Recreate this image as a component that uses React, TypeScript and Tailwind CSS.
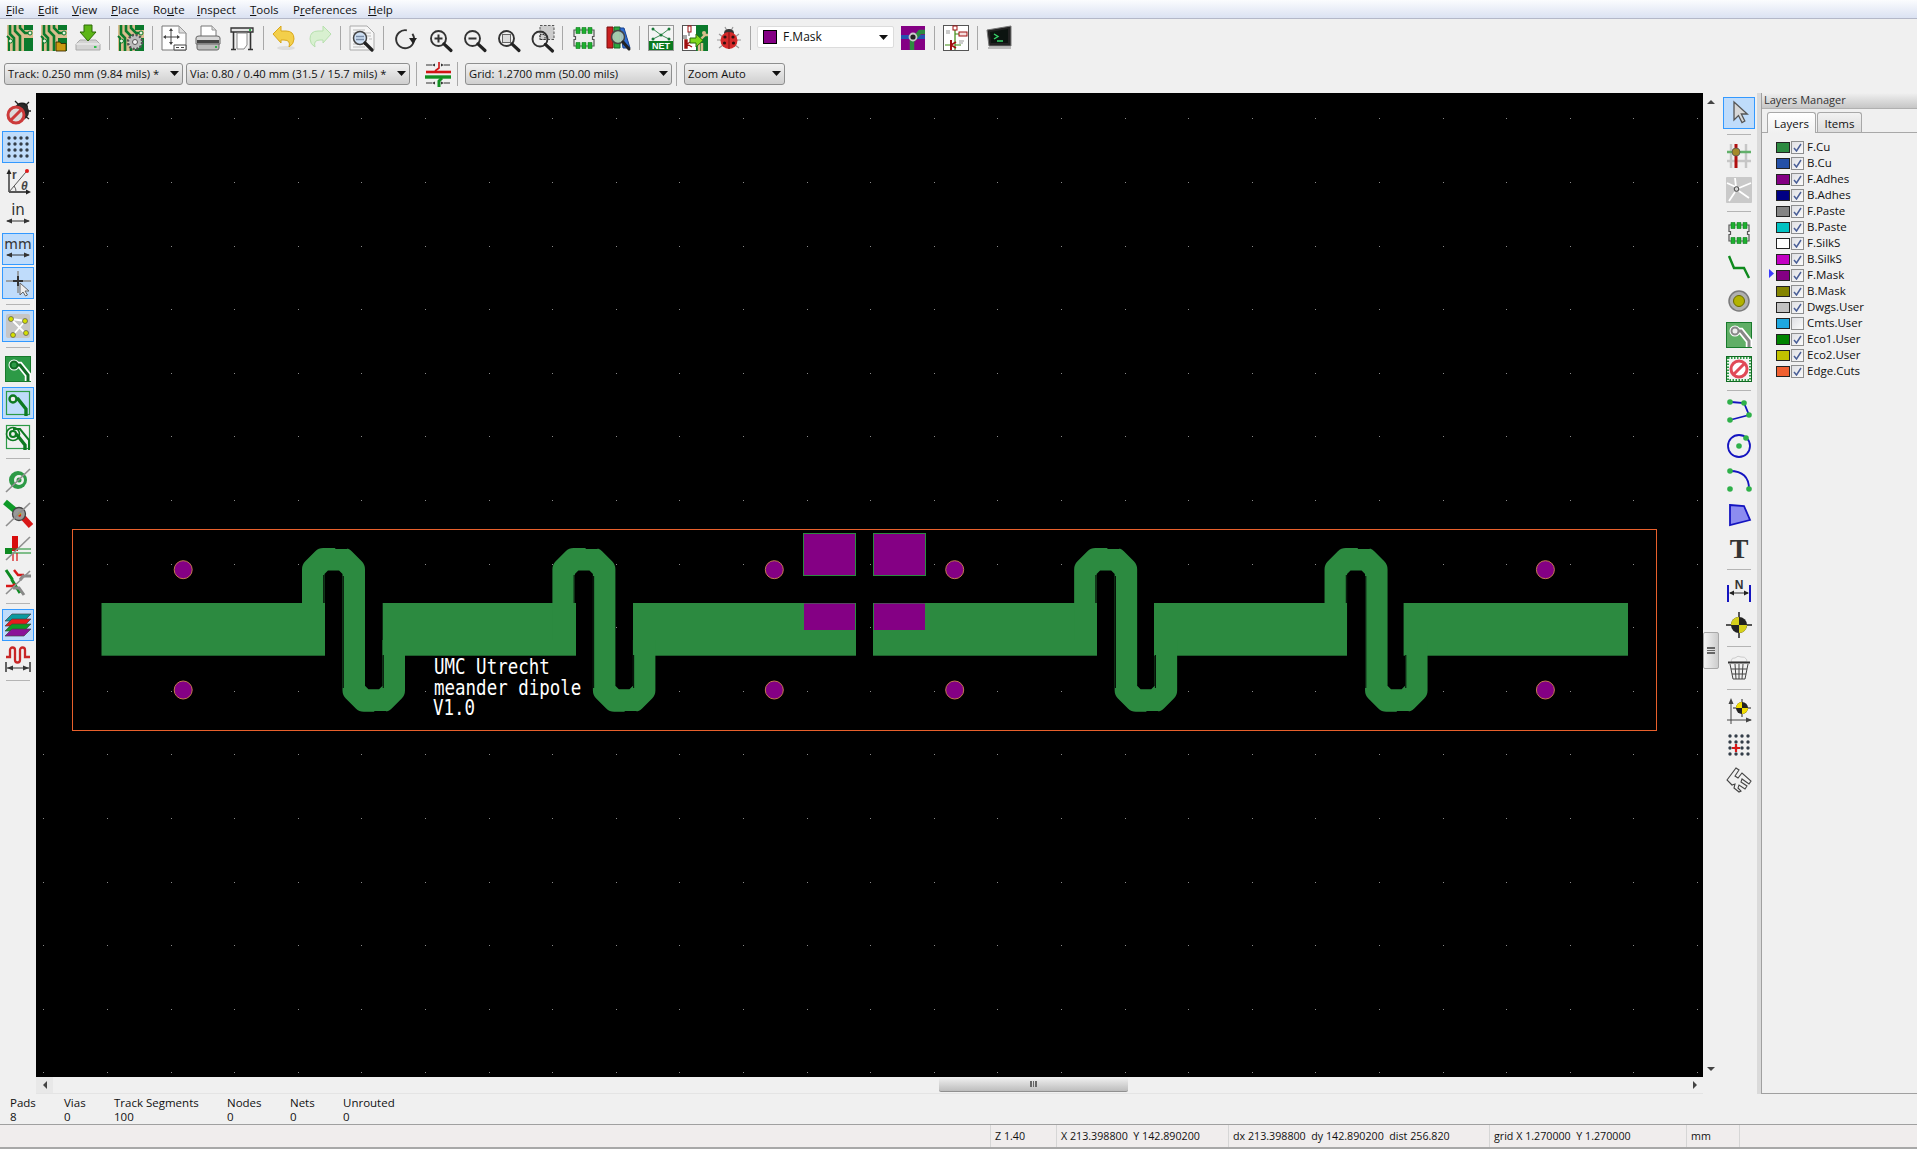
import React from 'react';

const range = (n: number) => Array.from({ length: n }, (_, i) => i);

// --- shared icon parts (all in a 26x26 box) ---
const Board = () => (
  <>
    <rect width="26" height="26" fill="#d9bd8e" />
    <path d="M17 13h9v13h-9zM17 0h9v5h-9z" fill="#0b7a2c" />
    <path d="M3 0v9l4 4v13M8 0v6l5 5v15M13 0v3l5 5h5" fill="none" stroke="#0b7a2c" strokeWidth="2.6" />
    <path d="M0 11l2 2v13" fill="none" stroke="#0b7a2c" strokeWidth="2" />
    <circle cx="23" cy="8" r="2" fill="#e8f4e0" stroke="#0b7a2c" />
    <circle cx="3.5" cy="16" r="2" fill="#e8f4e0" stroke="#0b7a2c" />
  </>
);

const Mag = ({ cx = 12.5, cy = 13.5, r = 7.5 }: { cx?: number; cy?: number; r?: number }) => (
  <>
    <circle cx={cx} cy={cy} r={r} fill="none" stroke="#333" strokeWidth="1.900" />
    <path d={`M${cx + r * 0.72} ${cy + r * 0.72}L${cx + r + 5} ${cy + r + 4.5}`} stroke="#222" strokeWidth="3.200" strokeLinecap="round" />
  </>
);

const Chip = () => (
  <>
    <path d="M3 5h20v6.500h-1.500v3H23V21H3v-6.500h1.500v-3H3z" fill="#eeeeee" stroke="#555" strokeWidth="1.200" />
    <path d="M5 2.500h4v6H5zM11 2.500h4v6h-4zM17 2.500h4v6h-4zM5 17.500h4v6H5zM11 17.500h4v6h-4zM17 17.500h4v6h-4z" fill="#1db02f" stroke="#0d7a1c" strokeWidth=".6" />
  </>
);

const Slash = () => <path d="M1 25L25 2" stroke="#8f8f8f" strokeWidth="1.600" />;

const Ladybug = () => (
  <>
    <path d="M3 9L7 12M23 9L19 12M1 15H5M25 15H21M3 23L7 20M23 23L19 20M9 2L11 6M17 2L15 6" stroke="#999" strokeWidth="1.200" fill="none" />
    <ellipse cx="13" cy="8" rx="5" ry="4" fill="#333" />
    <circle cx="13" cy="15.500" r="8.500" fill="#d62a2a" />
    <path d="M13 7v17" stroke="#7a1414" />
    <circle cx="9" cy="12" r="1.600" fill="#331010" />
    <circle cx="17" cy="12" r="1.600" fill="#331010" />
    <circle cx="8.500" cy="18" r="1.600" fill="#331010" />
    <circle cx="17.500" cy="18" r="1.600" fill="#331010" />
  </>
);

const Dots = () => (
  <>
    {range(16).map((i) => (
      <circle key={i} cx={4 + (i % 4) * 6} cy={4 + Math.floor(i / 4) * 6} r="1.700" fill="#333d48" />
    ))}
  </>
);

const icons: Record<string, React.ReactNode> = {
  board: <Board />,
  boardOpen: (
    <>
      <Board />
      <path d="M15 17h4l1 1.500h5V26H15z" fill="#c99a10" stroke="#3a2c00" strokeWidth=".9" />
    </>
  ),
  save: (
    <>
      <path d="M5 15L1 19v6h24v-6l-4-4z" fill="#d3d3d3" stroke="#aaa" />
      <path d="M1 19h24" stroke="#f4f4f4" />
      <rect x="19" y="21" width="2.500" height="2" fill="#2fc04a" />
      <path d="M9 0h8v7h4l-8 9-8-9h4z" fill="#5cb516" stroke="#2c6a06" />
    </>
  ),
  boardGear: (
    <>
      <Board />
      <circle cx="17" cy="17" r="7" fill="#cfcfcf" stroke="#555" strokeWidth="2.600" strokeDasharray="2.200 1.500" />
      <circle cx="17" cy="17" r="5.500" fill="#bbb" />
      <circle cx="17" cy="17" r="2.500" fill="#f4f4f4" stroke="#555" />
    </>
  ),
  page: (
    <>
      <path d="M1 1h17l7 7v17H1z" fill="#fff" stroke="#777" />
      <path d="M18 1v7h7z" fill="#ddd" stroke="#999" />
      <path d="M10 4v15M3 12h15" stroke="#444" />
      <path d="M10 3l-2 3h4zM10 20l-2-3h4zM2 12l3-2v4zM19 12l-3-2v4z" fill="#444" />
      <path d="M13 20h12v5H13z" fill="#fff" stroke="#444" />
      <path d="M15 22.500h3M20 22.500h3" stroke="#444" />
    </>
  ),
  printer: (
    <>
      <path d="M6 1h11l4 4v8H6z" fill="#fff" stroke="#777" />
      <path d="M17 1v4h4" fill="#ddd" stroke="#999" />
      <path d="M1 13q0-2 3-2h18q3 0 3 2v6H1z" fill="#d8d8d8" stroke="#666" />
      <path d="M2 15h22v3H2z" fill="#444" />
      <path d="M2 19h22v4q0 2-2 2H4q-2 0-2-2z" fill="#bbb" stroke="#666" />
      <rect x="20" y="21" width="2" height="2" fill="#33b04a" />
    </>
  ),
  plotter: (
    <>
      <path d="M2 3h22v4H2z" fill="#e4e4e4" stroke="#333" strokeWidth="1.300" />
      <path d="M4.500 7v17M21.500 7v17M2 24.500h5M19 24.500h5" stroke="#333" strokeWidth="1.600" />
      <path d="M8 8h10v12l-3 4H8z" fill="#fff" stroke="#888" />
      <rect x="20" y="4" width="2" height="2" fill="#2fb04a" />
    </>
  ),
  undo: (
    <>
      <ellipse cx="14" cy="23" rx="9" ry="2" fill="#ddd" />
      <path d="M1 9L9 1v5h5q8 0 8 8 0 5-5 8 2-7-5-7H9v3z" fill="#f3cf4a" stroke="#d9a71c" />
    </>
  ),
  redo: <path d="M25 9l-8-8v5h-5q-8 0-8 8 0 5 5 8-2-7 5-7h3v3z" fill="#d8f0d0" stroke="#b7e0ae" />,
  doc: (
    <>
      <path d="M1 1h17l7 7v17H1z" fill="#f6f6f6" stroke="#aaa" />
      <path d="M4 5h12M4 8h18M4 19h8M4 22h12M18 11h4M20 14h3" stroke="#bbb" />
      <circle cx="11" cy="13" r="6.500" fill="#cfe0f4" stroke="#444" strokeWidth="1.500" />
      <path d="M7 11.500h8M7 14.500h8" stroke="#7c8ea8" strokeWidth="1.500" />
      <path d="M16 18l7 7" stroke="#222" strokeWidth="3.200" strokeLinecap="round" />
    </>
  ),
  refresh: (
    <>
      <path d="M19.500 8A9 9 0 1 0 22 14" fill="none" stroke="#333" strokeWidth="1.900" transform="rotate(-35 13 14)" />
      <path d="M17 13h8l-4 6z" fill="#222" />
    </>
  ),
  zoomIn: (
    <>
      <Mag />
      <path d="M8.500 13.500h8M12.500 9.500v8" stroke="#333" strokeWidth="2" />
    </>
  ),
  zoomOut: (
    <>
      <Mag />
      <path d="M8.500 13.500h8" stroke="#333" strokeWidth="2" />
    </>
  ),
  zoomFit: (
    <>
      <Mag />
      <rect x="8.500" y="9.500" width="8" height="8" fill="#ddd" stroke="#666" />
    </>
  ),
  zoomArea: (
    <>
      <rect x="12" y=".5" width="14" height="14" fill="#cccccc" stroke="#555" strokeDasharray="2.500 1.500" />
      <Mag cx={12} cy={14} />
      <path d="M12 9.500h5v5h-5z" fill="none" stroke="#333" strokeDasharray="1.500 1" />
    </>
  ),
  chip: <Chip />,
  layerLens: (
    <>
      <path d="M2 2h6v21H2z" fill="#c91f1f" stroke="#7a0f0f" />
      <path d="M9 2h6v21H9z" fill="#2aa840" stroke="#146a24" />
      <path d="M15 3l4 0 6 20h-7z" fill="#2f6dd1" stroke="#1a4290" />
      <circle cx="13" cy="12" r="6.500" fill="#b9d2c0" fillOpacity=".85" stroke="#444" strokeWidth="1.500" />
      <path d="M18 17l6 7" stroke="#222" strokeWidth="3" strokeLinecap="round" />
    </>
  ),
  net: (
    <>
      <rect x=".5" y=".5" width="25" height="25" fill="#f4f4f4" stroke="#999" />
      <path d="M5 4l8 6 8-6M5 14l8-4 8 4" stroke="#3d8d55" fill="none" />
      <circle cx="5" cy="4" r="1.500" fill="#1a7a3a" />
      <circle cx="21" cy="4" r="1.500" fill="#1a7a3a" />
      <circle cx="13" cy="10" r="1.500" fill="#1a7a3a" />
      <circle cx="5" cy="14" r="1.500" fill="#1a7a3a" />
      <circle cx="21" cy="14" r="1.500" fill="#1a7a3a" />
      <rect x="1" y="16" width="24" height="9" fill="#0b7a1f" />
      <text x="13" y="24" textAnchor="middle" fill="#fff" fontSize="9" fontWeight="700" className="font-['Liberation_Sans',sans-serif]">NET</text>
    </>
  ),
  schToPcb: (
    <>
      <rect x=".5" y=".5" width="25" height="25" fill="#fff" stroke="#555" />
      <path d="M14 0h12v26H14z" fill="#0b7a2c" />
      <path d="M17 26V16l6-6h3M20 26v-8" stroke="#d9bd8e" strokeWidth="2.400" fill="none" />
      <circle cx="22" cy="8" r="2" fill="#d9bd8e" />
      <rect x="6" y="1" width="3" height="6" fill="#fff" stroke="#a01010" />
      <path d="M7 7v4M1 11h4M1 13h4" stroke="#555" />
      <path d="M3 15h2v8H3zM5 19l5-3M5 19l5 3" stroke="#a01010" strokeWidth="1.400" fill="#a01010" />
      <path d="M8 13h6V9l7 6.500-7 6.500v-4H8z" fill="#7fd81a" stroke="#2d6d08" />
    </>
  ),
  bug: <Ladybug />,
  viaSize: (
    <g transform="translate(1 1)">
      <rect width="24" height="24" fill="#840084" />
      <path d="M0 9h24v4H0z" fill="#2454b0" />
      <path d="M11 24v-9l8-9h5" stroke="#2c8a40" strokeWidth="4.500" fill="none" />
      <circle cx="12" cy="11" r="3.500" fill="#222" stroke="#ccc" strokeWidth="1.800" />
    </g>
  ),
  schematic: (
    <>
      <rect x=".5" y=".5" width="25" height="25" fill="#fff" stroke="#555" />
      <path d="M12 1v24M12 9h6M2 20h6M12 20h6" stroke="#3d8a10" strokeWidth="1.200" />
      <rect x="10" y="1" width="4" height="4" fill="#fff" stroke="#a01010" />
      <rect x="16" y="7" width="8" height="4" fill="#f4dede" stroke="#a01010" />
      <path d="M8 15v10" stroke="#a01010" strokeWidth="2" />
      <path d="M8 20l5-3M8 20l5 3" stroke="#a01010" strokeWidth="1.500" />
      <path d="M3 6h4M3 8h4M16 16h5M16 18h4" stroke="#999" />
    </>
  ),
  terminal: (
    <>
      <path d="M1 5L25 1v20H3z" fill="#222" stroke="#777" />
      <path d="M4 7l18-3v14H5z" fill="#0c1410" />
      <path d="M8 9l4 2.500-4 2.500M11 16h6" stroke="#38d46a" fill="none" strokeWidth="1.400" />
      <path d="M2 23h23" stroke="#bbb" strokeWidth="2" />
    </>
  ),
  trackVia: (
    <>
      <path d="M1 4h6M19 4h6M1 22h6M19 22h6" stroke="#333" />
      <path d="M7 4l3-1.500v3zM19 4l-3-1.500v3zM7 22l3-1.500v3zM19 22l-3-1.500v3z" fill="#333" />
      <path d="M10 10l4-3V1" stroke="#d01515" strokeWidth="1.600" fill="none" />
      <path d="M1 11h25" stroke="#d01515" strokeWidth="2.600" />
      <path d="M0 16h26" stroke="#119022" strokeWidth="3.400" />
      <path d="M17 17l-3 3v6" stroke="#119022" strokeWidth="3" fill="none" />
    </>
  ),
  // left bar
  bugOff: (
    <>
      <ellipse cx="17" cy="7" rx="6" ry="4.500" fill="#1c1c1c" />
      <circle cx="16" cy="12" r="8" fill="#2a2a2a" />
      <path d="M10 1l4 4M24 2l-4 4M26 11h-4M24 19l-4-3M16 22v-3" stroke="#222" strokeWidth="1.300" />
      <circle cx="11" cy="15" r="8" fill="#dcdcdc" stroke="#cc3a3a" strokeWidth="3" />
      <path d="M5.500 20.500L16.500 9.500" stroke="#cc3a3a" strokeWidth="3" />
    </>
  ),
  grid: <Dots />,
  polar: (
    <>
      <path d="M4 24V3M4 24h20" stroke="#222" strokeWidth="1.300" />
      <path d="M4 1l-2.500 5h5zM26 24l-5-2.500v5z" fill="#222" />
      <path d="M4 24L21 4" stroke="#555" />
      <path d="M11 24a8 8 0 0 0-2-6" stroke="#555" fill="none" />
      <circle cx="22" cy="3" r="2" fill="#e01818" />
      <text x="7" y="11" fontSize="12" fontWeight="700" fill="#444" className="font-['Liberation_Sans',sans-serif]">r</text>
      <text x="16" y="22" fontSize="12" fontWeight="700" fontStyle="italic" fill="#444" className="font-['Liberation_Sans',sans-serif]">θ</text>
    </>
  ),
  inch: (
    <>
      <text x="13" y="13" textAnchor="middle" fontSize="15" fill="#333" className="font-['DejaVu_Sans',sans-serif]">in</text>
      <path d="M2 19h22" stroke="#333" />
      <path d="M1 19l6-2.500v5zM25 19l-6-2.500v5z" fill="#333" />
    </>
  ),
  mm: (
    <>
      <text x="13" y="13" textAnchor="middle" fontSize="14" fill="#333" className="font-['DejaVu_Sans',sans-serif]">mm</text>
      <path d="M2 19h22" stroke="#333" />
      <path d="M1 19l6-2.500v5zM25 19l-6-2.500v5z" fill="#333" />
    </>
  ),
  cursor: (
    <>
      <path d="M1 11h25M13 1v22" stroke="#8a8a8a" strokeWidth="1.500" />
      <path d="M13 6v10M8 11h10" stroke="#333" strokeWidth="2" />
      <path d="M15 13v12l3-3 2.500 4 2-1-2.500-4h4z" fill="#eee" stroke="#666" />
    </>
  ),
  ratsnest: (
    <>
      <rect x="1" y="1" width="24" height="24" rx="2" fill="#c6c6c6" />
      <path d="M6 6l14 14M8 22L20 8M6 6l15 2" stroke="#fff" strokeWidth="1.800" />
      <circle cx="6" cy="6" r="2.500" fill="#d6e000" stroke="#555" strokeWidth=".7" />
      <circle cx="20" cy="8" r="2.500" fill="#d6e000" stroke="#555" strokeWidth=".7" />
      <circle cx="8" cy="22" r="2.500" fill="#d6e000" stroke="#555" strokeWidth=".7" />
      <circle cx="21" cy="20" r="2.500" fill="#d6e000" stroke="#555" strokeWidth=".7" />
    </>
  ),
  padFill: (
    <>
      <rect x=".5" y=".5" width="25" height="25" fill="#2c9a46" stroke="#187a2c" />
      <path d="M9 9h6l8 10v6" stroke="#fff" strokeWidth="6.500" fill="none" />
      <circle cx="9" cy="9" r="5.500" fill="#fff" />
      <path d="M9 9h6l8 10v6" stroke="#106a22" strokeWidth="3" fill="none" />
      <circle cx="9" cy="9" r="3.500" fill="#2c9a46" stroke="#106a22" strokeWidth="2" />
    </>
  ),
  padLine: (
    <>
      <rect x="1.500" y="1.500" width="23" height="23" fill="none" stroke="#2c9a46" strokeWidth="1.200" />
      <path d="M9 9h4l8 10v7" stroke="#0e7a22" strokeWidth="3.400" fill="none" />
      <circle cx="8" cy="9" r="3.500" fill="#f0f0f0" stroke="#0e7a22" strokeWidth="2.400" />
    </>
  ),
  padDouble: (
    <>
      <rect x="1.500" y="1.500" width="23" height="23" fill="none" stroke="#2c9a46" strokeWidth="1.200" />
      <path d="M8 5h7l9 11v10" stroke="#0e7a22" strokeWidth="2" fill="none" />
      <path d="M9 11h3l8 10v5" stroke="#0e7a22" strokeWidth="3.400" fill="none" />
      <circle cx="8" cy="10" r="3" fill="#f0f0f0" stroke="#0e7a22" strokeWidth="2.200" />
      <circle cx="8" cy="10" r="6.500" fill="none" stroke="#0e7a22" strokeWidth="1.600" />
    </>
  ),
  viaOff: (
    <>
      <circle cx="13" cy="13" r="9" fill="#2c9a46" />
      <circle cx="14" cy="13" r="5" fill="#f0f0f0" />
      <circle cx="14" cy="13" r="2.500" fill="#2c9a46" />
      <Slash />
    </>
  ),
  holeOff: (
    <>
      <path d="M0 1l12 10" stroke="#0e9a28" strokeWidth="6" />
      <path d="M15 13l11 12" stroke="#d81818" strokeWidth="6" />
      <circle cx="14" cy="13" r="6.500" fill="#999" stroke="#444" strokeWidth="1.300" />
      <path d="M14 11a3 3 0 0 1 2 4l-4 0z" fill="#c9b400" />
      <path d="M16 13a3 3 0 0 1-1 3l-2-1z" fill="#d81818" />
      <Slash />
    </>
  ),
  padOff: (
    <>
      <path d="M7 1h6v15H7z" fill="#d80c0c" />
      <path d="M0 13h7v6H0z" fill="#0e8a22" />
      <path d="M7 14h19M7 18h19" stroke="#0e8a22" strokeWidth="1.200" />
      <path d="M8 18v8M12 18v8" stroke="#d80c0c" strokeWidth="1.200" />
      <Slash />
    </>
  ),
  traceOff: (
    <>
      <path d="M1 1l6 9v1l8 13" stroke="#0e8a22" strokeWidth="3" fill="none" />
      <path d="M9 1l4 5h6" stroke="#d81818" strokeWidth="2.500" fill="none" />
      <path d="M26 7h-8l-3 4" stroke="#888" strokeWidth="3" fill="none" />
      <path d="M1 17h7l2-2" stroke="#d81818" strokeWidth="2.500" fill="none" />
      <path d="M8 19h6l5 7" stroke="#888" strokeWidth="3" fill="none" />
      <Slash />
    </>
  ),
  layers: (
    <>
      <path d="M7 2h19l-7 7H0z" fill="#0a9aa0" stroke="#444" strokeWidth=".7" />
      <path d="M7 7h19l-7 7H0z" fill="#e81c1c" stroke="#444" strokeWidth=".7" />
      <path d="M7 12h19l-7 7H0z" fill="#0f9a26" stroke="#444" strokeWidth=".7" />
      <path d="M7 17h19l-7 7H0z" fill="#8a1298" stroke="#444" strokeWidth=".7" />
    </>
  ),
  meander: (
    <>
      <path d="M1 11h4V4a2.500 2.500 0 0 1 5 0v10a2.500 2.500 0 0 0 5 0V4a2.500 2.500 0 0 1 5 0v7h5" fill="none" stroke="#c82626" strokeWidth="2.300" />
      <path d="M1 16v10M25 16v10" stroke="#333" strokeWidth="1.500" />
      <path d="M2 22h22" stroke="#333" />
      <path d="M2 22l6-2.500v5zM24 22l-6-2.500v5z" fill="#333" />
    </>
  ),
  // right bar
  arrow: <path d="M8 2v18l4.500-4.500 3.500 7 2.800-1.500-3.500-7h6z" fill="#d8d8d8" stroke="#555" strokeWidth="1.300" />,
  net2: (
    <>
      <path d="M5 1v24M20 1v24M1 18h24" stroke="#c6c6c6" strokeWidth="2.500" />
      <path d="M1 9h24" stroke="#62b06a" strokeWidth="2.500" />
      <path d="M10 1v24" stroke="#b00f0f" strokeWidth="3" />
      <circle cx="10" cy="9" r="4" fill="#a58a2a" stroke="#555" strokeWidth=".8" />
    </>
  ),
  ratsGrey: (
    <>
      <rect width="26" height="26" rx="1" fill="#c9c9c9" />
      <path d="M10 10L1 6M10 10L9 1M13 11l12-5M13 14l10 7M9 15l-6 9" stroke="#fff" strokeWidth="1.800" />
      <circle cx="10.500" cy="12" r="2.300" fill="#d6d6d6" stroke="#444" />
    </>
  ),
  module: <Chip />,
  trackAdd: <path d="M3 2l5 12h10l5 10" fill="none" stroke="#0f8a1e" strokeWidth="2.400" />,
  viaAdd: (
    <>
      <circle cx="13" cy="13" r="10" fill="#b0b0b0" stroke="#7a7a7a" strokeWidth="1.500" />
      <circle cx="13" cy="13" r="5.500" fill="#b3b300" stroke="#6a6a00" />
    </>
  ),
  zoneFill: (
    <>
      <rect x=".5" y=".5" width="25" height="25" fill="#60ae66" stroke="#187a2c" />
      <path d="M9 9h6l8 10v6" stroke="#fff" strokeWidth="6.500" fill="none" />
      <circle cx="9" cy="9" r="5.500" fill="#fff" />
      <path d="M9 9h6l8 10v6" stroke="#888" strokeWidth="3" fill="none" />
      <circle cx="9" cy="9" r="3.500" fill="#eee" stroke="#888" strokeWidth="2" />
    </>
  ),
  keepout: (
    <>
      <rect x=".5" y=".5" width="25" height="25" fill="#e6f2e2" stroke="#106a22" />
      <rect x="2" y="2" width="22" height="22" fill="#f4f4f4" stroke="#2c9a46" strokeWidth="2" strokeDasharray="1.500 1.500" />
      <circle cx="13" cy="13" r="8" fill="#fff" stroke="#e04a58" strokeWidth="3" />
      <path d="M7.500 18.500l11-11" stroke="#e04a58" strokeWidth="3" />
    </>
  ),
  line: (
    <>
      <path d="M5 3l13 1 5 12L4 21" fill="none" stroke="#1414c0" strokeWidth="1.800" />
      <circle cx="4" cy="3" r="2.800" fill="#2fb04a" />
      <circle cx="18" cy="4" r="2.800" fill="#2fb04a" />
      <circle cx="23" cy="16" r="2.800" fill="#2fb04a" />
      <circle cx="4" cy="21" r="2.800" fill="#2fb04a" />
    </>
  ),
  circle: (
    <>
      <circle cx="13" cy="13" r="11" fill="none" stroke="#1414c0" strokeWidth="1.800" />
      <circle cx="13" cy="13" r="2.800" fill="#2fb04a" />
      <circle cx="20" cy="5" r="2.800" fill="#2fb04a" />
    </>
  ),
  arc: (
    <>
      <path d="M4 4q19 0 19 18" fill="none" stroke="#1414c0" strokeWidth="1.800" />
      <circle cx="4" cy="4" r="2.800" fill="#2fb04a" />
      <circle cx="4" cy="22" r="2.800" fill="#2fb04a" />
      <circle cx="23" cy="22" r="2.800" fill="#2fb04a" />
    </>
  ),
  polygon: <path d="M4 4l14 1 6 14-20 5z" fill="#8c8cf0" stroke="#1414c0" strokeWidth="1.800" />,
  text: <text x="13" y="23" textAnchor="middle" fontSize="28" fontWeight="700" fill="#333" className="font-['Liberation_Serif',serif]">T</text>,
  dim: (
    <>
      <text x="13" y="11" textAnchor="middle" fontSize="12" fontWeight="700" fill="#333" className="font-['Liberation_Sans',sans-serif]">N</text>
      <path d="M2 7v17M24 7v17" stroke="#1414c0" strokeWidth="2" />
      <path d="M4 15h18" stroke="#333" />
      <path d="M3 15l5-2.500v5zM23 15l-5-2.500v5z" fill="#222" />
    </>
  ),
  target: (
    <>
      <path d="M0 13h26M13 0v26" stroke="#222" strokeWidth="1.500" />
      <circle cx="13" cy="13" r="8" fill="#222" />
      <path d="M13 13V5a8 8 0 0 0-8 8zM13 13v8a8 8 0 0 0 8-8z" fill="#d6d01a" />
    </>
  ),
  trash: (
    <>
      <path d="M5 6q1-4 4-3 3-3 6-1 4-1 6 3l-1 2H6z" fill="#f2f2f2" stroke="#ccc" />
      <path d="M2 7.500h22" stroke="#333" strokeWidth="2" />
      <path d="M4 9l3 15h12l3-15M9 9l1 15M13 9v15M17 9l-1 15M5 14h16M6 19h14" fill="none" stroke="#444" />
    </>
  ),
  origin: (
    <>
      <path d="M5 26V4M1 22h24" stroke="#444" />
      <path d="M5 0l-2.500 6h5zM26 22l-6-2.500v5z" fill="#444" />
      <path d="M7 10h18M16 1v18" stroke="#222" />
      <circle cx="16" cy="10" r="6" fill="#222" />
      <path d="M16 10V4a6 6 0 0 0-6 6zM16 10v6a6 6 0 0 0 6-6z" fill="#f2dc00" />
    </>
  ),
  gridOrigin: (
    <>
      <Dots />
      <path d="M10 12v8M6 16h8" stroke="#d81818" strokeWidth="2.200" />
    </>
  ),
  caliper: (
    <>
      <path d="M1 14L10 2l3 2-4 6 3 2 4-5 9 8-2 3-7-5-1 3 6 4-2 3-6-4-1 3 3 3-2 1-5-4 1-4-3 1z" fill="none" stroke="#444" strokeWidth="1.100" />
    </>
  ),
};

const Icon = ({ name, size = 26 }: { name: string; size?: number }) => (
  <svg width={size} height={size} viewBox="0 0 26 26" className="block overflow-visible">
    {icons[name]}
  </svg>
);

const HSep = () => (
  <div className="flex h-[37px] w-[9px] items-center justify-center">
    <div className="h-[24px] w-px bg-[#a8a8a8]" />
  </div>
);

const VSep = () => (
  <div className="flex h-[9px] w-full items-center justify-center">
    <div className="h-px w-[24px] bg-[#b4b4b4]" />
  </div>
);

const ToolButton = ({ name, wide }: { name: string; wide?: boolean }) => (
  <div className={wide ? 'flex h-[37px] w-[34px] items-center justify-center' : 'flex h-[34px] w-[34px] items-center justify-center'}>
    <Icon name={name} />
  </div>
);

const SideButton = ({ name, on }: { name: string; on?: boolean }) => (
  <div className="flex h-[34px] w-full items-center justify-center">
    {on ? (
      <div className="flex h-[32px] w-[32px] items-center justify-center border border-[#3399ff] bg-[#bfdcfb]">
        <Icon name={name} />
      </div>
    ) : (
      <Icon name={name} />
    )}
  </div>
);

const DownArrow = () => (
  <svg width="9" height="5" viewBox="0 0 9 5" className="block shrink-0">
    <path d="M0 0h9L4.500 5z" fill="#111" />
  </svg>
);

const Dropdown = ({ label, cls }: { label: string; cls: string }) => (
  <div className={`flex h-[22px] items-center justify-between rounded-[3px] border border-[#8e8f8f] bg-gradient-to-b from-[#f2f2f2] to-[#cfcfcf] pl-[3px] pr-[3px] text-[11.2px] ${cls}`}>
    <span className="whitespace-pre">{label}</span>
    <DownArrow />
  </div>
);

const menus: [string, string, string, string][] = [
  ['', 'F', 'ile', 'w-[32px]'],
  ['', 'E', 'dit', 'w-[34px]'],
  ['', 'V', 'iew', 'w-[39px]'],
  ['', 'P', 'lace', 'w-[42px]'],
  ['Ro', 'u', 'te', 'w-[44px]'],
  ['', 'I', 'nspect', 'w-[53px]'],
  ['', 'T', 'ools', 'w-[43px]'],
  ['P', 'r', 'eferences', 'w-[75px]'],
  ['', 'H', 'elp', 'w-[40px]'],
];

const leftTools: (string | [string, boolean])[] = [
  ['bugOff', false], ['grid', true], ['polar', false], ['inch', false], ['mm', true], ['cursor', true], 'sep',
  ['ratsnest', true], 'sep',
  ['padFill', false], ['padLine', true], ['padDouble', false], 'sep',
  ['viaOff', false], ['holeOff', false], ['padOff', false], ['traceOff', false], 'sep',
  ['layers', true], ['meander', false], 'sep',
];

const rightTools: (string | [string, boolean])[] = [
  ['arrow', true], 'sep',
  ['net2', false], ['ratsGrey', false], 'sep',
  ['module', false], ['trackAdd', false], ['viaAdd', false], ['zoneFill', false], ['keepout', false], 'sep',
  ['line', false], ['circle', false], ['arc', false], ['polygon', false], ['text', false], 'sep',
  ['dim', false], ['target', false], 'sep',
  ['trash', false], 'sep',
  ['origin', false], ['gridOrigin', false], ['caliper', false],
];

const layers: [string, string, boolean][] = [
  ['F.Cu', 'bg-[#2c8a40]', true],
  ['B.Cu', 'bg-[#2450a8]', true],
  ['F.Adhes', 'bg-[#840084]', true],
  ['B.Adhes', 'bg-[#000084]', true],
  ['F.Paste', 'bg-[#848484]', true],
  ['B.Paste', 'bg-[#00c2c2]', true],
  ['F.SilkS', 'bg-[#ffffff]', true],
  ['B.SilkS', 'bg-[#c200c2]', true],
  ['F.Mask', 'bg-[#840084]', true],
  ['B.Mask', 'bg-[#848400]', true],
  ['Dwgs.User', 'bg-[#c2c2c2]', true],
  ['Cmts.User', 'bg-[#1ea8e0]', false],
  ['Eco1.User', 'bg-[#008400]', true],
  ['Eco2.User', 'bg-[#c2c200]', true],
  ['Edge.Cuts', 'bg-[#f06030]', true],
];

const stats: [string, string, string][] = [
  ['Pads', '8', 'w-[54px]'],
  ['Vias', '0', 'w-[50px]'],
  ['Track Segments', '100', 'w-[113px]'],
  ['Nodes', '0', 'w-[63px]'],
  ['Nets', '0', 'w-[53px]'],
  ['Unrouted', '0', 'w-[80px]'],
];

const statusCells: [string, string][] = [
  ['', 'w-[991px]'],
  ['Z 1.40', 'w-[66px]'],
  ['X 213.398800  Y 142.890200', 'w-[172px]'],
  ['dx 213.398800  dy 142.890200  dist 256.820', 'w-[261px]'],
  ['grid X 1.270000  Y 1.270000', 'w-[197px]'],
  ['mm', 'w-[53px]'],
];

// board artwork, drawn in page coordinates
const gridXs = range(27).map((i) => 43.4 + i * 63.6);
const gridYs = range(16).map((i) => 118.3 + i * 63.6);
const tracks = [[101.5, 325], [382.7, 576], [633, 856], [873, 1097], [1154, 1347], [1403.6, 1628]];
const meanders = [313.25, 563.65, 1085.4, 1335.8];
const holes = [183.2, 774.3, 954.7, 1545.4];

function meanderPath(a: number) {
  const b = a + 40.5;
  const c = a + 80.5;
  const k = 10;
  return `M${a} 640V${559.25 + k}L${a + k} 559.25H${b - k}L${b} ${559.25 + k}V${700.5 - k}L${b + k} 700.5H${c - k}L${c} ${700.5 - k}V640`;
}

const PcbCanvas = () => (
  <svg width="1667" height="984" viewBox="36 93 1667 984" className="block bg-black">
    {gridXs.flatMap((x) =>
      gridYs.map((y) => <rect key={`${x}-${y}`} x={Math.round(x)} y={Math.round(y)} width="1" height="1" fill="#8a8a8a" />),
    )}
    <rect x="72.500" y="529.500" width="1584" height="201" fill="none" stroke="#e8602c" />
    {tracks.map(([x1, x2]) => (
      <rect key={x1} x={x1} y="603" width={x2 - x1} height="52.700" fill="#2c8a40" />
    ))}
    {meanders.map((a) => (
      <g key={a}>
        <path d={meanderPath(a)} fill="none" stroke="#2c8a40" strokeWidth="22.500" strokeLinejoin="round" />
        <path
          d={`M${a + 10.5} 575V603M${a + 30} 576V688M${a + 70} 655V688M${a + 22} 548.500h12M${a + 61} 711.500h12`}
          stroke="#000"
          strokeWidth="1"
          fill="none"
        />
      </g>
    ))}
    {[803.5, 873.5].map((x) => (
      <g key={x}>
        <rect x={x} y="533.500" width="52" height="42" fill="#840084" stroke="#2c8a40" />
        <rect x={x + 0.5} y="603.500" width="51" height="26.500" fill="#840084" />
      </g>
    ))}
    {holes.flatMap((x) =>
      [569.7, 690].map((y) => <circle key={`${x}-${y}`} cx={x} cy={y} r="9" fill="#840084" stroke="#c47a50" />),
    )}
    <g fill="#ffffff" className="font-['DejaVu_Sans_Mono',monospace]" fontSize="17.500">
      <text transform="translate(434 674) scale(1 1.200)">UMC Utrecht</text>
      <text transform="translate(434 695) scale(1 1.200)">meander dipole</text>
      <text transform="translate(433 715) scale(1 1.200)">V1.0</text>
    </g>
  </svg>
);

const ScrollGlyph = ({ d }: { d: string }) => (
  <svg width="8" height="8" viewBox="0 0 8 8" className="block">
    <path d={d} fill="#444" />
  </svg>
);

export default function App() {
  return (
    <div className="flex h-[1149px] w-[1917px] flex-col overflow-hidden bg-[#f0f0f0] font-['Open_Sans',sans-serif] text-[11.5px] leading-none text-[#111]">
      {/* Menu bar */}
      <div className="flex h-[19px] items-center border-b border-[#b4b8c8] bg-gradient-to-b from-[#fbfcfe] to-[#dbe2f2] pl-[6px] pt-[1px]">
        {menus.map(([a, u, b, w]) => (
          <div key={u + b} className={w}>
            {a}
            <u>{u}</u>
            {b}
          </div>
        ))}
      </div>

      {/* Main toolbar */}
      <div className="flex h-[37px] items-center pl-[3px]">
        <ToolButton wide name="board" />
        <ToolButton wide name="boardOpen" />
        <ToolButton wide name="save" />
        <HSep />
        <ToolButton wide name="boardGear" />
        <HSep />
        <ToolButton wide name="page" />
        <ToolButton wide name="printer" />
        <ToolButton wide name="plotter" />
        <HSep />
        <ToolButton wide name="undo" />
        <ToolButton wide name="redo" />
        <HSep />
        <ToolButton wide name="doc" />
        <HSep />
        <ToolButton wide name="refresh" />
        <ToolButton wide name="zoomIn" />
        <ToolButton wide name="zoomOut" />
        <ToolButton wide name="zoomFit" />
        <ToolButton wide name="zoomArea" />
        <HSep />
        <ToolButton wide name="chip" />
        <ToolButton wide name="layerLens" />
        <HSep />
        <ToolButton wide name="net" />
        <ToolButton wide name="schToPcb" />
        <ToolButton wide name="bug" />
        <HSep />
        <div className="mx-[2px] mb-[1px] flex h-[22px] w-[137px] items-center justify-between rounded-[2px] border border-[#dcdcdc] bg-white pl-[5px] pr-[5px]">
          <span className="flex items-center gap-[6px] text-[12px]">
            <span className="block h-[14px] w-[14px] border border-black bg-[#840084]" />
            F.Mask
          </span>
          <DownArrow />
        </div>
        <ToolButton wide name="viaSize" />
        <HSep />
        <ToolButton wide name="schematic" />
        <HSep />
        <ToolButton wide name="terminal" />
      </div>

      {/* Options toolbar */}
      <div className="flex h-[37px] items-center pb-[2px] pl-[4px]">
        <Dropdown label="Track: 0.250 mm (9.84 mils) *" cls="w-[179px]" />
        <Dropdown label="Via: 0.80 / 0.40 mm (31.5 / 15.7 mils) *" cls="ml-[3px] w-[224px]" />
        <div className="mx-[2px] flex"><HSep /></div>
        <div className="flex w-[30px] justify-center"><Icon name="trackVia" /></div>
        <HSep />
        <Dropdown label="Grid: 1.2700 mm (50.00 mils)" cls="ml-[3px] w-[207px]" />
        <HSep />
        <Dropdown label="Zoom Auto" cls="ml-[3px] w-[101px]" />
      </div>

      {/* Work area */}
      <div className="flex h-[1001px]">
        <div className="w-[36px] shrink-0 pr-[1px] pt-[3px]">
          {leftTools.map((t, i) =>
            t === 'sep' ? <VSep key={i} /> : <SideButton key={i} name={(t as [string, boolean])[0]} on={(t as [string, boolean])[1]} />,
          )}
        </div>

        <div className="flex w-[1683px] shrink-0 flex-col">
          <div className="flex h-[984px]">
            <PcbCanvas />
            <div className="flex w-[16px] flex-col">
              <div className="flex h-[17px] items-center justify-center"><ScrollGlyph d="M4 2l4 4H0z" /></div>
              <div className="h-[522px]" />
              <div className="flex h-[37px] items-center justify-center rounded-[2px] border border-[#a8a8a8] bg-gradient-to-r from-[#f4f4f4] to-[#cdcdcd]">
                <div className="h-[7px] w-[8px] border-y border-[#666] bg-[linear-gradient(#666_1px,transparent_1px)] bg-[length:100%_2px]" />
              </div>
              <div className="flex-1" />
              <div className="flex h-[17px] items-center justify-center"><ScrollGlyph d="M0 2h8L4 6z" /></div>
            </div>
          </div>
          <div className="flex h-[17px] w-[1667px] border-b border-[#e4e4e4]">
            <div className="flex w-[17px] items-center justify-center bg-[#e8e8e8]"><ScrollGlyph d="M2 4l4-4v8z" /></div>
            <div className="w-[886px]" />
            <div className="flex h-[15px] w-[189px] items-center justify-center rounded-[2px] border-b border-[#909090] bg-gradient-to-b from-[#f2f2f2] to-[#bdbdbd]">
              <div className="h-[6px] w-[7px] border-x border-[#666] bg-[linear-gradient(90deg,#666_1px,transparent_1px)] bg-[length:2px_100%]" />
            </div>
            <div className="flex-1" />
            <div className="flex w-[17px] items-center justify-center"><ScrollGlyph d="M2 0l4 4-4 4z" /></div>
          </div>
        </div>

        <div className="h-[1001px] w-[38px] shrink-0 pl-[2px] pt-[3px]">
          {rightTools.map((t, i) =>
            t === 'sep' ? <VSep key={i} /> : <SideButton key={i} name={(t as [string, boolean])[0]} on={(t as [string, boolean])[1]} />,
          )}
        </div>
        <div className="w-[4px] shrink-0 bg-[#dadada]" />

        {/* Layers Manager */}
        <div className="flex w-[156px] shrink-0 flex-col border-b border-l border-[#a0a0a0]">
          <div className="flex h-[16px] items-center border-b border-[#b0b0b0] bg-gradient-to-b from-[#f0f0f0] to-[#c6c6c6] pb-[3px] pl-[2px] text-[11px] text-[#333]">
            Layers Manager
          </div>
          <div className="flex h-[24px] items-end border-b border-[#a8a8a8] pl-[5px]">
            <div className="relative top-px flex h-[21px] w-[49px] items-center justify-center rounded-t-[3px] border border-b-0 border-[#a8a8a8] bg-gradient-to-b from-[#ffffff] to-[#f0f0f0] pt-[2px]">
              Layers
            </div>
            <div className="ml-px flex h-[20px] w-[45px] items-center justify-center rounded-t-[3px] border border-b-0 border-[#a8a8a8] bg-gradient-to-b from-[#f2f2f2] to-[#dcdcdc] pt-[2px]">
              Items
            </div>
          </div>
          <div className="pt-[6px]">
            {layers.map(([name, color, checked]) => (
              <div key={name} className="relative flex h-[16px] items-center pl-[14px]">
                {name === 'F.Mask' && (
                  <svg width="5" height="9" viewBox="0 0 5 9" className="absolute left-[7px] top-[2px]">
                    <path d="M0 0l5 4.500L0 9z" fill="#3a3aff" />
                  </svg>
                )}
                <span className={`block h-[11px] w-[14px] shrink-0 border border-[#222] ${color}`} />
                <span className="ml-px flex h-[13px] w-[13px] shrink-0 items-center justify-center border border-[#8e8f8f] bg-gradient-to-br from-[#dfe0e4] to-[#fbfbfb]">
                  {checked && (
                    <svg width="9" height="9" viewBox="0 0 9 9" className="block">
                      <path d="M1 5l2.500 3L8 1" fill="none" stroke="#4a5f97" strokeWidth="1.500" />
                    </svg>
                  )}
                </span>
                <span className="ml-[3px] text-[11.5px]">{name}</span>
              </div>
            ))}
          </div>
        </div>
      </div>

      {/* Board statistics */}
      <div className="flex h-[31px] border-b border-[#a0a0a0] pl-[10px] pt-[3px]">
        {stats.map(([label, value, w]) => (
          <div key={label} className={w}>
            <div className="h-[14px]">{label}</div>
            <div className="h-[12px]">{value}</div>
          </div>
        ))}
      </div>

      {/* Status bar */}
      <div className="flex h-[24px] items-stretch border-b-2 border-[#a8a8a8] bg-[#f0eded]">
        {statusCells.map(([text, w]) => (
          <div key={w} className={`flex items-center whitespace-pre border-r border-[#d6d6d6] pl-[4px] text-[10.7px] ${w}`}>
            {text}
          </div>
        ))}
      </div>
    </div>
  );
}
